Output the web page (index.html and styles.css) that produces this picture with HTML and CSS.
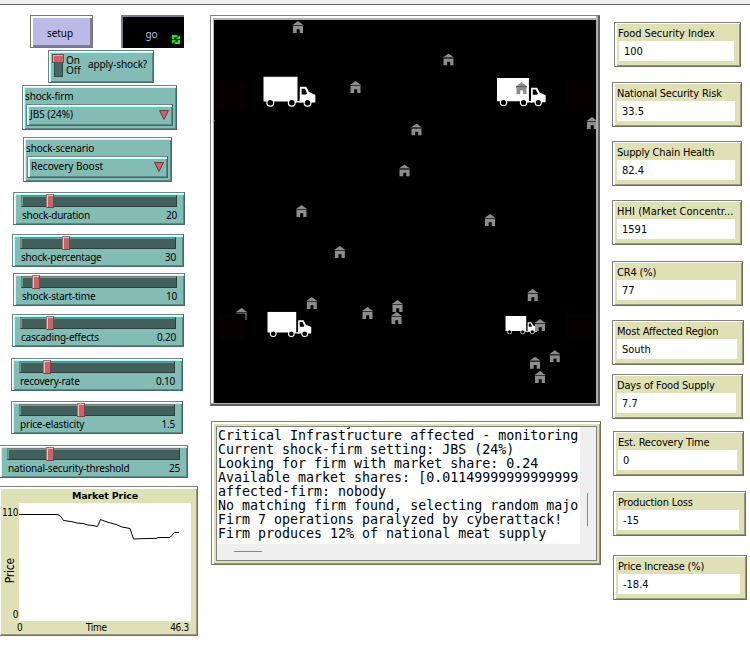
FILE: index.html
```
<!DOCTYPE html>
<html lang="en">
<head>
<meta charset="utf-8">
<title>Market model</title>
<link rel="stylesheet" href="styles.css">
</head>
<body>
<svg class="defs" aria-hidden="true">
  <symbol id="house" viewBox="0 0 11 12">
    <path d="M5.5 0 11 4H0Z" fill="#8d8d8d"/>
    <path d="M.5 5h10v7H7.200V8.300H4.200V12H.5Z" fill="#8d8d8d"/>
    <path d="M0 4h11v1H0Z" fill="#333"/>
  </symbol>
  <symbol id="truck" viewBox="4 45 292 174" preserveAspectRatio="none">
    <path d="M4 45h191v142H4Z" fill="#fff"/>
    <path d="M296 193V150l-37-16-15-30h-36l-1 90Z" fill="#fff"/>
    <path d="M181 185h33v9h-33Z" fill="#fff"/>
    <path d="M218 115h18l13 28-8 4h-23Z" fill="#000"/>
    <g fill="#000" stroke="#fff" stroke-width="7"><circle cx="43" cy="195" r="19"/><circle cx="163" cy="195" r="19"/><circle cx="251" cy="195" r="19"/></g>
  </symbol>
</svg>
<header class="topbar"></header>
<main class="board">
  <section class="controls">
    <div class="buttons">
      <button class="btn">setup</button>
      <button class="btn go">go
        <svg class="loop" viewBox="0 0 8 9" fill="#0f0"><path d="M0 0h5.500v2H2v2H0ZM8 0v4H4Z"/><path d="M8 9H2.500V7H6V5h2ZM0 9V5h4Z"/></svg>
      </button>
    </div>
    <div class="switch raised">
      <span class="toggle"><i></i></span>
      <span class="onoff"><span>On</span><span>Off</span></span>
      <span class="switch-name">apply-shock?</span>
    </div>
    <div class="chooser firm raised"><span class="name">shock-firm</span><div class="select raised"><span>JBS (24%)</span><svg viewBox="0 0 10 10"><path d="M.5.5h9l-4.500 9Z"/></svg></div></div>
    <div class="chooser scenario raised"><span class="name">shock-scenario</span><div class="select raised"><span>Recovery Boost</span><svg viewBox="0 0 10 10"><path d="M.5.5h9l-4.500 9Z"/></svg></div></div>

    <div class="slider raised duration"><div class="track"><i style="margin-left:24px"></i></div><p><span>shock-duration</span><span>20</span></p></div>
    <div class="slider raised percentage"><div class="track"><i style="margin-left:41px"></i></div><p><span>shock-percentage</span><span>30</span></p></div>
    <div class="slider raised start"><div class="track"><i style="margin-left:10px"></i></div><p><span>shock-start-time</span><span>10</span></p></div>
    <div class="slider raised cascading"><div class="track"><i style="margin-left:25px"></i></div><p><span>cascading-effects</span><span>0.20</span></p></div>
    <div class="slider raised recovery"><div class="track"><i style="margin-left:23px"></i></div><p><span>recovery-rate</span><span>0.10</span></p></div>
    <div class="slider raised elasticity"><div class="track"><i style="margin-left:57px"></i></div><p><span>price-elasticity</span><span>1.5</span></p></div>
    <div class="slider raised threshold"><div class="track"><i style="margin-left:38px"></i></div><p><span>national-security-threshold</span><span>25</span></p></div>

    <figure class="plot">
      <figcaption>Market Price</figcaption>
      <div class="ylabels"><span>110</span><b>Price</b><span>0</span></div>
      <svg class="canvas" viewBox="19 503 172 118"><path d="M19 514.500H57L60 515.500 63.500 520.500 71 521.500 77 523 83 523.500 88 525 93 525.500 97.500 526.500 100.500 519.500 107 522 116 524.500 122 527 130 528.500 133.500 539 141 538.700 157 538.300 158 537.500H170L174.500 532.500H179"/></svg>
      <div class="xlabels"><span>0</span><span>Time</span><span>46.3</span></div>
    </figure>
  </section>

  <section class="middle">
    <div class="world">
      <svg viewBox="214 20 382 383">
        <g fill="#060101"><path d="M217.500 82h27.500v27.500h-27.500ZM565.500 82h27.500v27.500h-27.500Z"/></g>
        <path d="M214 120h1v1h-1Z" fill="#555"/>
        <use href="#truck" x="263.300" y="76.500" width="52.300" height="30.500"/>
        <use href="#truck" x="497" y="78" width="48.800" height="28.500"/>
        <use href="#truck" x="267.300" y="311.700" width="44.200" height="25.500"/>
        <use href="#truck" x="505.300" y="316" width="32" height="18.500"/>
        <g>
          <use href="#house" x="292.500" y="21" width="11" height="12"/>
          <use href="#house" x="350" y="81" width="11" height="12"/>
          <use href="#house" x="411" y="123.500" width="11" height="12"/>
          <use href="#house" x="443" y="53.500" width="11" height="12"/>
          <use href="#house" x="516" y="82" width="11" height="12.500"/>
          <use href="#house" x="586.500" y="117" width="11" height="12"/>
          <use href="#house" x="399" y="164.500" width="11" height="12"/>
          <use href="#house" x="296" y="205" width="11" height="12"/>
          <use href="#house" x="334.300" y="246" width="11" height="12"/>
          <use href="#house" x="306.300" y="297" width="11" height="12"/>
          <use href="#house" x="362" y="307" width="11" height="12"/>
          <use href="#house" x="392" y="300" width="11" height="12"/>
          <use href="#house" x="391" y="312" width="11" height="12"/>
          <use href="#house" x="236" y="308" width="11" height="12"/>
          <use href="#house" x="484.500" y="214" width="11" height="12"/>
          <use href="#house" x="527.200" y="289" width="11" height="12"/>
          <use href="#house" x="534.500" y="319" width="11" height="12"/>
          <use href="#house" x="549.300" y="350" width="11" height="12.500"/>
          <use href="#house" x="529.500" y="356.500" width="11" height="12.500"/>
          <use href="#house" x="534.500" y="371" width="11" height="12"/>
        </g>
        <path d="M235 314h10.500v7H235Z" fill="#000"/>
        <g fill="#060101"><path d="M217.500 313.500h27.500v27.500h-27.500ZM565.500 313.500h27.500v27.500h-27.500Z"/></g>
      </svg>
    </div>
    <div class="output">
      <div class="console">
        <pre>National Security risk
Critical Infrastructure affected - monitoring
Current shock-firm setting: JBS (24%)
Looking for firm with market share: 0.24
Available market shares: [0.01149999999999999
affected-firm: nobody
No matching firm found, selecting random majo
Firm 7 operations paralyzed by cyberattack!
Firm produces 12% of national meat supply</pre>
        <div class="vbar"></div>
        <div class="hbar"></div>
      </div>
    </div>
  </section>

  <section class="monitors">
    <div class="monitor m1"><span>Food Security Index</span><output>100</output></div>
    <div class="monitor m2"><span>National Security Risk</span><output>33.5</output></div>
    <div class="monitor m3"><span>Supply Chain Health</span><output>82.4</output></div>
    <div class="monitor m4"><span>HHI (Market Concentr...</span><output>1591</output></div>
    <div class="monitor m5"><span>CR4 (%)</span><output>77</output></div>
    <div class="monitor m6"><span>Most Affected Region</span><output>South</output></div>
    <div class="monitor m7"><span>Days of Food Supply</span><output>7.7</output></div>
    <div class="monitor m8"><span>Est. Recovery Time</span><output>0</output></div>
    <div class="monitor m9"><span>Production Loss</span><output>-15</output></div>
    <div class="monitor m10"><span>Price Increase (%)</span><output>-18.4</output></div>
  </section>
</main>
</body>
</html>
```
FILE: styles.css
```
* { box-sizing: border-box; }
body { margin: 0; background: #fff; color: #000; width: 750px; height: 672px; overflow: hidden; font: 10px/12px "Noto Sans", sans-serif; }
.defs { display: none; }
.topbar { height: 5px; background: #eee; border-bottom: 1px solid #666; }
.board { display: grid; grid-template-columns: 210px 402px 138px; height: 667px; }
p, figure, pre { margin: 0; }

.controls { display: flex; flex-direction: column; align-items: flex-start; padding-top: 10px; overflow: hidden; }
.buttons { display: flex; gap: 28px; margin-left: 30px; }
.btn { width: 63px; height: 33px; padding: 3px 3px 0 0; border: 1px solid #77776f; background: #bdbbe5; box-shadow: inset 2px 2px #fff, inset -2px -2px #7c7b98; font: 10px/12px "Noto Sans", sans-serif; color: #000; letter-spacing: -.1px; }
.go { display: flex; justify-content: center; align-items: center; padding: 4px 2px 0 0; background: #000; color: #bdbbe5; border: 0; box-shadow: inset 2px 2px #7c7b98; position: relative; }
.loop { position: absolute; width: 8px; height: 9px; right: 4px; bottom: 4px; }

.raised { background: #82bcb5; border: 1px solid; border-color: #77807f #456965 #456965 #77807f; box-shadow: inset 1px 1px #fff, inset 2px 2px #b5fffb, inset -1px -1px #5b8984; }
.switch { width: 106px; height: 33px; margin: 2px 0 0 48px; display: flex; padding: 3px; white-space: nowrap; }
.toggle { flex: none; width: 9px; height: 22px; margin: 1px 0 0 2px; background: #456965; border: 1px solid #304846; display: flex; }
.toggle i { flex: none; width: 12px; height: 9px; margin: -2px 0 0 -3px; background: #ca6466; border: 1px solid #77504f; box-shadow: inset 1px 1px #ff9597; }
.onoff { display: flex; flex-direction: column; width: 16px; margin: 1px 0 0 3px; line-height: 10px; font-size: 10px; }
.switch-name { margin: 4px 0 0 6px; letter-spacing: -.1px; }

.chooser { height: 45px; padding: 4px 3px 3px; display: flex; flex-direction: column; justify-content: space-between; letter-spacing: -.15px; }
.name { margin-left: -1px; }
.firm { width: 155px; margin: 2px 0 0 22px; }
.scenario { width: 149px; margin: 7px 0 0 23px; }
.select { height: 22px; display: flex; justify-content: space-between; padding: 3px 3px 0; letter-spacing: 0; }
.select svg { width: 10px; height: 10px; margin-top: 2px; fill: #ca6466; stroke: #693c3d; }

.slider { width: 172px; height: 33px; padding: 2px 7px; letter-spacing: -.2px; }
.track { height: 12px; background: #435f5b; border: 1px solid #2b403d; border-top-color: #777f7e; border-left-color: #777f7e; box-shadow: inset 1px 1px #62a097; display: flex; }
.track i { width: 8px; height: 14px; margin-top: -2px; background: #ca6466; border: 1px solid; border-color: #85807e #804244 #804244 #85807e; box-shadow: inset 1px 1px #ffb4b5; }
.slider p { display: flex; justify-content: space-between; padding: 2px 0 0 1px; }
.duration { margin: 10px 0 0 13px; }
.percentage { margin: 9px 0 0 12px; }
.start { margin: 6px 0 0 13px; }
.cascading { margin: 8px 0 0 12px; }
.recovery { margin: 11px 0 0 11px; }
.elasticity { margin: 10px 0 0 11px; }
.threshold { width: 189px; margin: 11px 0 0 -1px; }

.plot { width: 199px; height: 150px; margin: 8px 0 0 -1px; background: #e0e0b6; border: 1px solid; border-color: #808080 #6e6e59 #6e6e59 #808080; box-shadow: inset 1px 2px #fff, inset -1px -1px #99997d; display: grid; grid-template: 16px 118px 14px / 19px 172px 6px; font: 10px/12px "DejaVu Sans Condensed", "DejaVu Sans", sans-serif; }
.plot figcaption { grid-column: 1 / 4; text-align: center; padding: 3px 0 0 13px; font: bold 9.500px/12px "DejaVu Sans", sans-serif; letter-spacing: -.15px; }
.ylabels { display: flex; flex-direction: column; justify-content: space-between; align-items: flex-end; padding: 4px 1px 0 0; letter-spacing: -.4px; }
.ylabels b { writing-mode: vertical-rl; transform: rotate(180deg); font: 12px/14px "DejaVu Sans Condensed", sans-serif; letter-spacing: -.2px; margin: 14px 1px 0 0; }
.canvas { width: 172px; height: 118px; background: #fff; fill: none; stroke: #000; }
.xlabels { grid-column: 1 / 4; display: flex; justify-content: space-between; padding: 1px 8px 0 17px; letter-spacing: -.3px; }

.middle { padding-top: 10px; }
.world { width: 390px; height: 391px; background: #fff; border: 1px solid; border-color: #808080 #606060 #606060 #808080; padding: 4px 3px 2px; box-shadow: inset -1px -1px #606060, inset -3px -2px #b0b0b0, inset 2px 2px #fff, inset 3px 4px #b0b0b0; }
.world svg { display: block; width: 382px; height: 383px; background: #000; }
.output { width: 390px; height: 144px; margin: 15px 0 0 1px; background: #e0e0b6; border: 1px solid; border-color: #808080 #6e6e59 #6e6e59 #808080; box-shadow: inset 2px 2px #fff, inset -1px -1px #99997d; padding: 4px 3px 3px 4px; }
.console { height: 135px; width: 381px; border: 1px solid #808080; background: #efefef; display: grid; grid-template: 117px 16px / 363px 16px; overflow: hidden; }
.console pre { background: #fff; overflow: hidden; height: 117px; padding-left: 1px; font: 13.300px/14px "DejaVu Sans Mono", monospace; }
.console pre::before { content: ""; display: block; margin-top: -12px; }
.vbar { width: 1px; height: 33px; margin: 66px 0 0 7px; background: #888; }
.hbar { width: 28px; height: 1px; margin: 7px 0 0 17px; background: #888; }

.monitors { font: 11px/14px "DejaVu Sans Condensed", "DejaVu Sans", sans-serif; padding-top: 17px; }
.monitor { height: 45px; width: 130px; padding: 3px 6px 5px 4px; background: #e0e0b6; border: 1px solid; border-color: #808080 #6e6e59 #6e6e59 #808080; box-shadow: inset 1px 1px #fff, inset 2px 1px #fff, inset -1px -1px #99997d; white-space: nowrap; }
.monitor span { display: block; height: 15px; padding-top: 1px; letter-spacing: -.18px; }
.monitor output { display: block; height: 20px; background: #fff; padding: 4px 4px 2px 5px; }
.monitor.m1 span { margin-left: -1px; letter-spacing: -.05px; }
.monitor.m4 span { letter-spacing: .05px; }
.m1 { width: 127px; margin-left: 2px; }
.m2 { margin-top: 15px; }
.m3 { margin-top: 14px; }
.m4 { margin-top: 14px; }
.m5 { width: 131px; margin-top: 16px; }
.m6 { width: 132px; margin-top: 14px; }
.m7 { width: 131px; margin-top: 9px; }
.m8 { width: 131px; margin: 12px 0 0 1px; }
.m9 { width: 133px; margin: 15px 0 0 1px; }
.m10 { width: 134px; margin: 19px 0 0 1px; }
```
